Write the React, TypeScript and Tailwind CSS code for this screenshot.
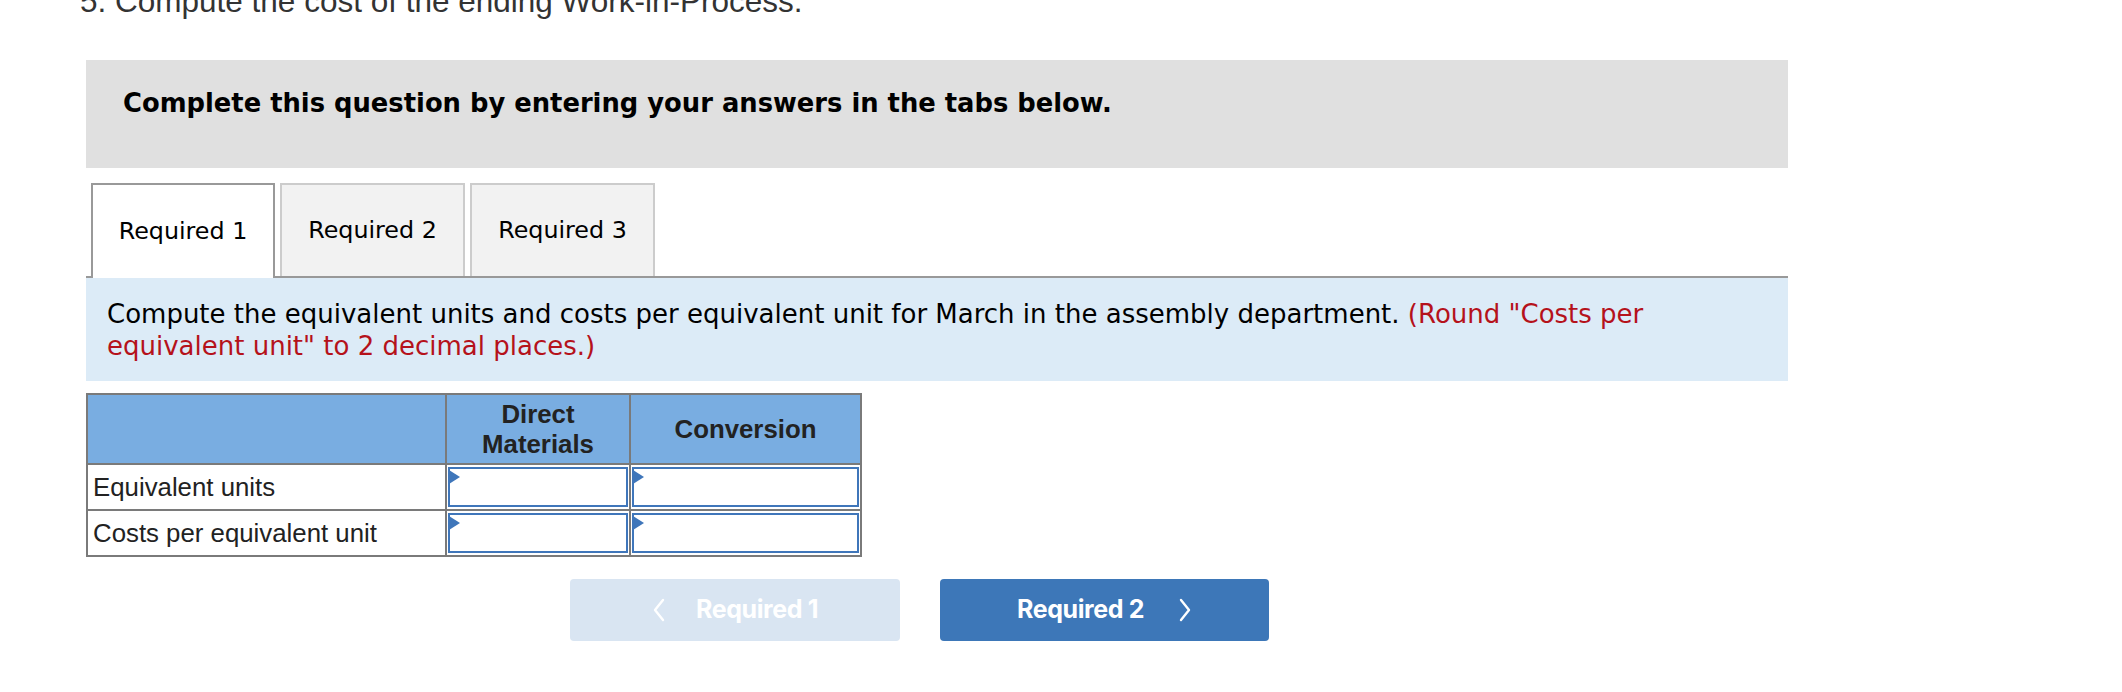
import React from 'react';

const tabs = ['Required 1', 'Required 2', 'Required 3'];

const rows = ['Equivalent units', 'Costs per equivalent unit'];

const Chevron: React.FC<{ dir: 'left' | 'right' }> = ({ dir }) => (
  <svg width="14" height="26" viewBox="0 0 14 26" fill="none">
    <polyline
      points={dir === 'left' ? '11,3 3,13 11,23' : '3,3 11,13 3,23'}
      stroke="#ffffff"
      strokeWidth="2.4"
      strokeLinecap="round"
      strokeLinejoin="round"
    />
  </svg>
);

const InputCell: React.FC = () => (
  <td className="border-2 border-[#7a7a7a] p-[1px] bg-white">
    <div className="relative h-[40px] border-2 border-[#3f76ba] bg-white">
      <svg className="absolute -left-[1px] top-[1px]" width="11" height="14" viewBox="0 0 11 14">
        <polygon points="0,0 11,7 0,14" fill="#3f76ba" />
      </svg>
    </div>
  </td>
);

export default function App() {
  return (
    <div className="w-[2122px] h-[692px] bg-white overflow-hidden">
      <p className="-mt-[14px] ml-[80px] font-['Liberation_Sans',Arial,sans-serif] text-[31.5px] leading-[31px] text-[#333]">
        5. Compute the cost of the ending Work-in-Process.
      </p>

      <div className="ml-[86px] w-[1702px]">
        <div className="mt-[43px] h-[108px] bg-[#e0e0e0] pl-[37px] pt-[28px]">
          <p className="font-['DejaVu_Sans',Verdana,sans-serif] font-bold text-[25.8px] leading-[30px] text-black">
            Complete this question by entering your answers in the tabs below.
          </p>
        </div>

        <div className="mt-[15px] flex items-start pl-[5px] gap-[5px] border-b-2 border-[#999] h-[95px]">
          {tabs.map((t, i) =>
            i === 0 ? (
              <div
                key={t}
                className="w-[184px] h-[95px] -mb-[2px] bg-white border-2 border-b-0 border-[#999] flex items-center justify-center font-['DejaVu_Sans',Verdana,sans-serif] text-[23.8px] text-black"
              >
                {t}
              </div>
            ) : (
              <div
                key={t}
                className="w-[185px] h-[93px] bg-[#f2f2f2] border-2 border-b-0 border-[#cccccc] flex items-center justify-center font-['DejaVu_Sans',Verdana,sans-serif] text-[23.8px] text-black"
              >
                {t}
              </div>
            )
          )}
        </div>

        <div className="h-[103px] bg-[#dcebf7] pl-[21px] pr-[30px] pt-[20px] font-['DejaVu_Sans',Verdana,sans-serif] text-[26px] leading-[32px] text-black">
          Compute the equivalent units and costs per equivalent unit for March in the assembly department.{' '}
          <span className="text-[#b5121b]">(Round "Costs per equivalent unit" to 2 decimal places.)</span>
        </div>

        <table className="mt-[12px] border-collapse border-2 border-[#7a7a7a] font-['Liberation_Sans',Arial,sans-serif] text-[25.8px] text-[#222]">
          <thead>
            <tr className="h-[70px] bg-[#79ade1]">
              <th className="w-[359px] border-2 border-[#7a7a7a]"></th>
              <th className="w-[184px] border-2 border-[#7a7a7a] font-bold leading-[30px] text-center">
                Direct
                <br />
                Materials
              </th>
              <th className="w-[231px] border-2 border-[#7a7a7a] font-bold text-center">Conversion</th>
            </tr>
          </thead>
          <tbody>
            {rows.map(r => (
              <tr key={r} className="h-[46px]">
                <td className="border-2 border-[#7a7a7a] bg-white pl-[5px] text-left">{r}</td>
                <InputCell />
                <InputCell />
              </tr>
            ))}
          </tbody>
        </table>

        <div className="mt-[22px] flex gap-[40px] pl-[484px] font-['Inter',sans-serif] font-bold text-[25px] text-white tracking-[-0.4px]">
          <button className="w-[330px] h-[62px] rounded-[4px] bg-[#d9e5f2] flex items-center justify-center gap-[30px]">
            <Chevron dir="left" />
            <span>Required 1</span>
          </button>
          <button className="w-[329px] h-[62px] rounded-[4px] bg-[#3d77b8] flex items-center justify-center gap-[34px]">
            <span>Required 2</span>
            <Chevron dir="right" />
          </button>
        </div>
      </div>
    </div>
  );
}
